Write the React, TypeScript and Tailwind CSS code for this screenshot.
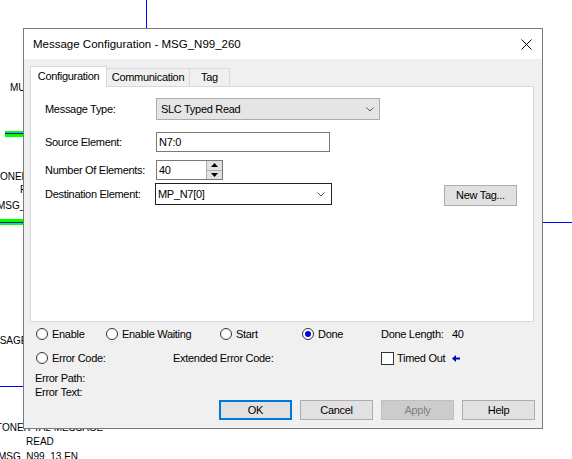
import React from "react";

const Radio = ({ checked }: { checked?: boolean }) => (
  <span className="w-[12px] h-[12px] rounded-full border border-[#333333] bg-white flex items-center justify-center shrink-0">
    {checked && <span className="w-[6px] h-[6px] rounded-full bg-[#0000d8]" />}
  </span>
);

const Chevron = () => (
  <svg width="8" height="5" viewBox="0 0 8 5" className="shrink-0">
    <path d="M0.5 0.5 L4 4 L7.5 0.5" fill="none" stroke="#555555" strokeWidth="1" />
  </svg>
);

const Btn = ({ label, kind }: { label: string; kind?: "default" | "disabled" }) => {
  if (kind === "default")
    return (
      <div className="w-[73px] h-[20px] border-2 border-[#0078d7] bg-[#e1e1e1] flex items-center justify-center">
        {label}
      </div>
    );
  if (kind === "disabled")
    return (
      <div className="w-[73px] h-[20px] border border-[#bfbfbf] bg-[#cccccc] text-[#838383] flex items-center justify-center">
        {label}
      </div>
    );
  return (
    <div className="w-[73px] h-[20px] border border-[#adadad] bg-[#e1e1e1] flex items-center justify-center">
      {label}
    </div>
  );
};

export default function App() {
  return (
    <div className="relative w-[572px] h-[459px] bg-white overflow-hidden font-['Liberation_Sans',Arial,sans-serif] text-black">
      {/* ladder canvas behind the dialog */}
      <div className="absolute left-[146px] top-0 w-[1px] h-[28px] bg-[#0000ff]" />
      <div className="absolute left-[542px] top-[222px] w-[30px] h-[1px] bg-[#0000ff]" />
      <div className="absolute left-[10px] top-[82px] text-[10px] leading-[12px]">MUL</div>
      <div className="absolute left-[5px] top-[131px] w-[30px] h-[6px] bg-[#00ff00]" />
      <div className="absolute left-[5px] top-[133px] w-[30px] h-[1px] bg-[#0000ff]" />
      <div className="absolute left-[-6px] top-[171px] text-[10px] leading-[12px]">TONER</div>
      <div className="absolute left-[20px] top-[184px] text-[10px] leading-[12px]">F</div>
      <div className="absolute left-[-3px] top-[200px] text-[10px] leading-[12px]">MSG_N99</div>
      <div className="absolute left-0 top-[219px] w-[30px] h-[6px] bg-[#00ff00]" />
      <div className="absolute left-0 top-[222px] w-[30px] h-[1px] bg-[#0000ff]" />
      <div className="absolute left-[-22px] top-[335px] text-[10px] leading-[12px]">MESSAGE</div>
      <div className="absolute left-0 top-[386px] w-[30px] h-[1px] bg-[#0000ff]" />
      <div className="absolute left-[-4px] top-[422px] text-[10px] leading-[12px] whitespace-nowrap">TONER TA2 MESSAGE</div>
      <div className="absolute left-[26px] top-[436px] text-[10px] leading-[12px]">READ</div>
      <div className="absolute left-[-2px] top-[451px] text-[10px] leading-[12px] whitespace-nowrap">MSG_N99_13.EN</div>

      {/* dialog window */}
      <div className="absolute left-[23px] top-[28px] w-[520px] h-[401px] border border-[#7a7a7a] bg-[#f0f0f0] flex flex-col text-[11px] leading-[13px] tracking-[-0.3px]">
        <div className="h-[30px] bg-white flex items-center pl-[9px] pr-[9px] shrink-0">
          <span className="flex-1 text-[11.5px] tracking-normal">Message Configuration - MSG_N99_260</span>
          <svg width="11" height="11" viewBox="0 0 11 11" className="mr-[1px]">
            <path d="M0.5 0.5 L10.5 10.5 M10.5 0.5 L0.5 10.5" stroke="#000" strokeWidth="1" />
          </svg>
        </div>

        <div className="flex-1 flex flex-col pl-[6px] pt-[7px]">
          {/* tabs */}
          <div className="flex items-end">
            <div className="relative z-10 w-[77px] h-[21px] -mb-px bg-white border-l border-t border-r border-[#d9d9d9] flex items-center justify-center pb-[1px]">
              Configuration
            </div>
            <div className="w-[83px] h-[18px] border-t border-r border-[#d9d9d9] flex items-center justify-center">
              Communication
            </div>
            <div className="w-[40px] h-[18px] border-t border-r border-[#d9d9d9] flex items-center justify-center">
              Tag
            </div>
          </div>

          {/* tab page */}
          <div className="w-[504px] h-[236px] border border-[#d9d9d9] bg-white pl-[14px] pt-[11px] flex flex-col">
            <div className="flex items-center h-[22px]">
              <span className="w-[111px]">Message Type:</span>
              <div className="w-[224px] h-[22px] border border-[#adadad] bg-[#e5e5e5] flex items-center justify-between pl-[4px] pr-[5px]">
                <span>SLC Typed Read</span>
                <Chevron />
              </div>
            </div>
            <div className="flex items-center h-[20px] mt-[12px]">
              <span className="w-[111px]">Source Element:</span>
              <div className="w-[174px] h-[20px] border border-[#7a7a7a] bg-white flex items-center pl-[2px]">N7:0</div>
            </div>
            <div className="flex items-center h-[20px] mt-[8px]">
              <span className="w-[111px]">Number Of Elements:</span>
              <div className="w-[67px] h-[20px] border border-[#7a7a7a] bg-white flex items-stretch">
                <span className="flex-1 flex items-center pl-[2px]">40</span>
                <div className="w-[16px] flex flex-col border-l border-[#adadad]">
                  <div className="flex-1 bg-[#e1e1e1] border-b border-[#adadad] flex items-center justify-center">
                    <svg width="7" height="4" viewBox="0 0 7 4"><path d="M0 4 L3.5 0 L7 4 Z" fill="#000" /></svg>
                  </div>
                  <div className="flex-1 bg-[#e1e1e1] flex items-center justify-center">
                    <svg width="7" height="4" viewBox="0 0 7 4"><path d="M0 0 L7 0 L3.5 4 Z" fill="#000" /></svg>
                  </div>
                </div>
              </div>
            </div>
            <div className="flex items-start mt-[3px]">
              <span className="w-[110px] h-[22px] flex items-center">Destination Element:</span>
              <div className="w-[177px] h-[22px] border border-[#222222] bg-white flex items-center justify-between pl-[2px] pr-[6px]">
                <span>MP_N7[0]</span>
                <Chevron />
              </div>
              <div className="ml-[112px] mt-[2px] w-[73px] h-[21px] border border-[#adadad] bg-[#e1e1e1] flex items-center justify-center">
                New Tag...
              </div>
            </div>
          </div>

          {/* status */}
          <div className="flex items-center h-[14px] mt-[5px] pl-[6px]">
            <div className="w-[70px] flex items-center gap-[4px]"><Radio /><span>Enable</span></div>
            <div className="w-[114px] flex items-center gap-[4px]"><Radio /><span>Enable Waiting</span></div>
            <div className="w-[82px] flex items-center gap-[4px]"><Radio /><span>Start</span></div>
            <div className="w-[79px] flex items-center gap-[4px]"><Radio checked /><span>Done</span></div>
            <div className="flex items-center">
              <span className="w-[71px]">Done Length:</span>
              <span>40</span>
            </div>
          </div>
          <div className="flex items-center h-[16px] mt-[9px] pl-[6px]">
            <div className="w-[137px] flex items-center gap-[4px]"><Radio /><span>Error Code:</span></div>
            <div className="w-[208px]">Extended Error Code:</div>
            <div className="flex items-center">
              <span className="w-[13px] h-[13px] border border-[#333333] bg-white" />
              <span className="ml-[3px]">Timed Out</span>
              <svg width="8" height="7" viewBox="0 0 8 7" className="ml-[7px]">
                <path d="M0 3.5 L4 0 L4 2.5 L8 2.5 L8 4.5 L4 4.5 L4 7 Z" fill="#0000c8" />
              </svg>
            </div>
          </div>
          <div className="h-[14px] mt-[5px] pl-[5px] flex items-center">Error Path:</div>
          <div className="h-[14px] pl-[5px] flex items-center">Error Text:</div>

          <div className="flex justify-end gap-[8px] mt-[1px] mr-[7px]">
            <Btn label="OK" kind="default" />
            <Btn label="Cancel" />
            <Btn label="Apply" kind="disabled" />
            <Btn label="Help" />
          </div>
        </div>
      </div>
    </div>
  );
}
